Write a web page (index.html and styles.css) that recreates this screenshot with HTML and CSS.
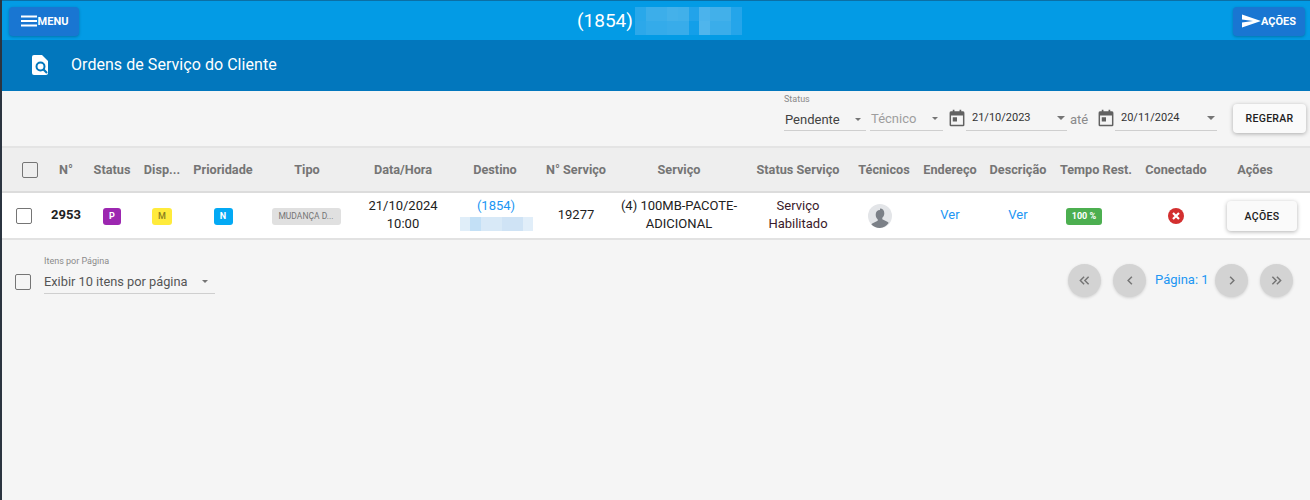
FILE: index.html
```html
<!DOCTYPE html>
<html lang="pt-BR">
<head>
    <meta charset="UTF-8">
    <title>Ordens de Serviço do Cliente</title>
    <link rel="stylesheet" href="styles.css">
</head>
<body>
    <header class="topbar">
        <button class="top-btn top-btn-menu">
            <svg width="18" height="18" viewBox="0 0 18 18"><path d="M1 3.5h16v2H1zM1 8h16v2H1zM1 12.500h16v2H1z" fill="#fff"/></svg>
            MENU
        </button>
        <div class="top-title">
            <span>(1854)</span>
            <span class="blur-name"><i class="blur-row blur-a"></i><i class="blur-row blur-b"></i></span>
        </div>
        <button class="top-btn top-btn-acoes">
            <svg width="19" height="18" viewBox="0 0 19 18"><path d="M0 2.500 19 9 0 15.500V10.500L11 9 0 7.500z" fill="#fff"/></svg>
            AÇÕES
        </button>
    </header>

    <div class="subheader">
        <svg class="sub-icon" width="16" height="20" viewBox="0 0 16 20">
            <path d="M2 0h8l6 6v12a2 2 0 0 1-2 2H2a2 2 0 0 1-2-2V2a2 2 0 0 1 2-2z" fill="#fff"/>
            <circle cx="8.500" cy="11.500" r="4" fill="none" stroke="#0277bd" stroke-width="2"/>
            <path d="M11.300 14.300 15 18" stroke="#0277bd" stroke-width="2.200"/>
        </svg>
        <h1>Ordens de Serviço do Cliente</h1>
    </div>

    <div class="filters">
        <div class="field field-status">
            <label>Status</label>
            <div class="select"><span>Pendente</span><b class="caret"></b></div>
        </div>
        <div class="field field-tecnico">
            <div class="select muted"><span>Técnico</span><b class="caret"></b></div>
        </div>
        <svg class="cal" width="18" height="20" viewBox="0 0 18 20"><path d="M4 0h2v2h6V0h2v2h2a2 2 0 0 1 2 2v14a2 2 0 0 1-2 2H2a2 2 0 0 1-2-2V4a2 2 0 0 1 2-2h2zM2 7v11h14V7zM4 9h5v5H4z" fill="#616161" fill-rule="evenodd"/></svg>
        <div class="field field-date">
            <div class="select date"><span>21/10/2023</span><b class="caret"></b></div>
        </div>
        <span class="ate">até</span>
        <svg class="cal" width="18" height="20" viewBox="0 0 18 20"><path d="M4 0h2v2h6V0h2v2h2a2 2 0 0 1 2 2v14a2 2 0 0 1-2 2H2a2 2 0 0 1-2-2V4a2 2 0 0 1 2-2h2zM2 7v11h14V7zM4 9h5v5H4z" fill="#616161" fill-rule="evenodd"/></svg>
        <div class="field field-date field-date-end">
            <div class="select date"><span>20/11/2024</span><b class="caret"></b></div>
        </div>
        <button class="btn-white btn-regerar">REGERAR</button>
    </div>

    <div class="grid grid-head">
        <div class="cell"><span class="check check-head"></span></div>
        <div class="cell">N°</div>
        <div class="cell">Status</div>
        <div class="cell">Disp...</div>
        <div class="cell">Prioridade</div>
        <div class="cell">Tipo</div>
        <div class="cell">Data/Hora</div>
        <div class="cell">Destino</div>
        <div class="cell">N° Serviço</div>
        <div class="cell">Serviço</div>
        <div class="cell">Status Serviço</div>
        <div class="cell">Técnicos</div>
        <div class="cell">Endereço</div>
        <div class="cell">Descrição</div>
        <div class="cell">Tempo Rest.</div>
        <div class="cell">Conectado</div>
        <div class="cell cell-head-acoes">Ações</div>
    </div>

    <div class="grid grid-row">
        <div class="cell"><span class="check"></span></div>
        <div class="cell num">2953</div>
        <div class="cell"><span class="tag tag-p">P</span></div>
        <div class="cell"><span class="tag tag-m">M</span></div>
        <div class="cell"><span class="tag tag-n">N</span></div>
        <div class="cell"><span class="tag-tipo">MUDANÇA D...</span></div>
        <div class="cell">21/10/2024<br>10:00</div>
        <div class="cell destino">
            <a>(1854)</a>
            <span class="blur-dest"></span>
        </div>
        <div class="cell">19277</div>
        <div class="cell">(4) 100MB-PACOTE-<br>ADICIONAL</div>
        <div class="cell status-serv">Serviço<br>Habilitado</div>
        <div class="cell">
            <svg class="avatar" width="24" height="24" viewBox="0 0 24 24">
                <circle cx="12" cy="12" r="12" fill="#e3e5e8"/>
                <path d="M12 4.500c2.700 0 4.300 2 4.300 4.700 0 2-.9 3.700-2 4.600v1.500l5 2.500c.6.300 1 .8 1.300 1.300A12 12 0 0 1 12 24a12 12 0 0 1-8.600-3.400c.3-.5.7-1 1.300-1.300l5-2.500v-1.500c-1.100-.9-2-2.600-2-4.600 0-2.700 1.600-4.700 4.300-4.700z" fill="#7b8087"/>
            </svg>
        </div>
        <div class="cell"><a>Ver</a></div>
        <div class="cell"><a>Ver</a></div>
        <div class="cell"><span class="tag-tempo">100 %</span></div>
        <div class="cell">
            <svg class="icon-off" width="16" height="16" viewBox="0 0 16 16">
                <circle cx="8" cy="8" r="8" fill="#d32f2f"/>
                <path d="M5 5l6 6M11 5l-6 6" stroke="#fff" stroke-width="2.200"/>
            </svg>
        </div>
        <div class="cell cell-row-acoes"><button class="btn-white btn-row">AÇÕES</button></div>
    </div>

    <footer class="pager-bar">
        <span class="check"></span>
        <div class="field field-pagesize">
            <label>Itens por Página</label>
            <div class="select"><span>Exibir 10 itens por página</span><b class="caret"></b></div>
        </div>
        <div class="pager">
            <button class="round"><svg width="11" height="9" viewBox="0 0 14 12"><path d="M6.500 1 1.500 6l5 5M12.500 1l-5 5 5 5" fill="none" stroke="#757575" stroke-width="2"/></svg></button>
            <button class="round"><svg width="6" height="9" viewBox="0 0 8 12"><path d="M6.500 1l-5 5 5 5" fill="none" stroke="#757575" stroke-width="2"/></svg></button>
            <span class="page-label">Página: 1</span>
            <button class="round"><svg width="6" height="9" viewBox="0 0 8 12"><path d="M1.500 1l5 5-5 5" fill="none" stroke="#757575" stroke-width="2"/></svg></button>
            <button class="round"><svg width="11" height="9" viewBox="0 0 14 12"><path d="M1.500 1l5 5-5 5M7.500 1l5 5-5 5" fill="none" stroke="#757575" stroke-width="2"/></svg></button>
        </div>
    </footer>
</body>
</html>
```

FILE: styles.css
```css
* {
    box-sizing: border-box;
}

html {
    height: 100%;
}

body {
    margin: 0;
    min-height: 100%;
    height: 500px;
    overflow: hidden;
    background: #f5f5f5;
    border-left: 2px solid #2b3440;
    font-family: Roboto, "Liberation Sans", sans-serif;
    font-size: 13px;
    color: #212121;
}

button {
    font-family: inherit;
    border: 0;
    cursor: pointer;
}

a {
    color: #2196f3;
}

/* top bar */
.topbar {
    height: 40px;
    display: flex;
    align-items: center;
    justify-content: space-between;
    padding: 0 5px 0 7px;
    background: #039be5;
    border-top: 1px solid #0b6fa5;
    color: #fff;
}

.top-btn {
    height: 29px;
    display: flex;
    align-items: center;
    justify-content: center;
    gap: 0;
    border-radius: 4px;
    background: #1976d2;
    color: #fff;
    font-size: 11px;
    font-weight: 700;
    box-shadow: 0 1px 3px rgba(0, 0, 0, .25);
}

.top-btn-menu {
    width: 70px;
    margin-top: 1px;
    padding: 0;
}

.top-btn-acoes {
    width: 72px;
    margin-top: 1px;
    padding: 0;
}

.top-title {
    display: flex;
    align-items: center;
    gap: 2px;
    margin-left: 7px;
    font-size: 19px;
}

.blur-name {
    width: 107px;
    height: 28px;
    display: flex;
    flex-direction: column;
}

.blur-row {
    flex: 1;
}

.blur-a {
    background: linear-gradient(90deg, #29a8ea 0 11px, #3caeea 11px 32px, #44b1ea 32px 43px, #41b0ea 43px 54px, #22a3ea 54px 64px, #4bb3ec 64px 75px, #42b0ea 75px 96px, #24a5ea 96px 107px);
}

.blur-b {
    background: linear-gradient(90deg, #2ca8ea 0 11px, #34abea 11px 32px, #38acea 32px 54px, #139fe9 54px 64px, #4fb5ec 64px 75px, #3aadea 75px 96px, #25a5ea 96px 107px);
}

/* sub header */
.subheader {
    height: 51px;
    display: flex;
    align-items: center;
    padding-left: 30px;
    background: #0277bd;
    color: #fff;
}

.sub-icon {
    margin-top: -1px;
}

.subheader h1 {
    margin: 0 0 2px 23px;
    font-size: 16px;
    font-weight: 400;
    letter-spacing: .05px;
}

/* filters */
.filters {
    height: 57px;
    display: flex;
    align-items: flex-end;
    padding: 0 4px 15px 782px;
    border-bottom: 2px solid #e4e4e4;
}

.field {
    display: flex;
    flex-direction: column;
    flex: none;
}

.field label {
    font-size: 9px;
    line-height: 11px;
    color: #8a8a8a;
    margin-bottom: 4px;
}

.select {
    display: flex;
    align-items: center;
    justify-content: space-between;
    height: 22px;
    padding: 0 5px 0 1px;
    border-bottom: 1px solid #cfcfcf;
    font-size: 13px;
    color: #424242;
}

.select.muted {
    padding-bottom: 2px;
    color: #9e9e9e;
}

.select.date {
    padding: 0 2px 4px 6px;
    font-size: 11px;
    color: #333;
}

.caret {
    width: 0;
    height: 0;
    border-left: 3px solid transparent;
    border-right: 3px solid transparent;
    border-top: 3px solid #757575;
}

.date .caret {
    border-left-width: 4px;
    border-right-width: 4px;
    border-top-width: 4px;
}

.field-status {
    width: 82px;
}

.field-tecnico {
    width: 73px;
    margin-left: 4px;
}

.field-date {
    width: 101px;
}

.field-date-end {
    width: 102px;
}

.cal {
    margin: 0 0 3px 5px;
    flex: none;
    transform: scale(.85);
}

.ate {
    width: 25px;
    padding-left: 3px;
    line-height: 22px;
    color: #8a8a8a;
    font-size: 13px;
}

.btn-white {
    background: #fafafa;
    color: #212121;
    border-radius: 4px;
    font-size: 10.500px;
    font-weight: 500;
    letter-spacing: .3px;
    box-shadow: 0 1px 4px rgba(0, 0, 0, .3);
}

.btn-regerar {
    width: 73px;
    height: 29px;
    margin: 0 0 -2px 16px;
    padding: 0;
}

/* table */
.grid {
    display: grid;
    grid-template-columns: 44px 40px 52px 48px 74px 94px 98px 86px 76px 130px 108px 64px 68px 68px 88px 72px 98px;
}

.cell {
    display: flex;
    flex-direction: column;
    align-items: center;
    justify-content: center;
    text-align: center;
    white-space: nowrap;
}

.grid-head {
    height: 45px;
    background: #eeeeee;
    border-bottom: 2px solid #dcdcdc;
    color: #757575;
    font-size: 12.700px;
    font-weight: 700;
}

.grid-head .cell:first-child {
    padding-left: 12px;
}

.cell-head-acoes {
    padding-right: 12px;
}

.grid-row {
    height: 47px;
    padding-bottom: 2px;
    background: #fff;
    border-bottom: 2px solid #e2e2e2;
    font-size: 13px;
    line-height: 18px;
}

.check {
    display: block;
    width: 16px;
    height: 16px;
    border: 1px solid #757575;
    border-radius: 2px;
    background: #fff;
}

.grid-row .check {
    margin-top: 2px;
}

.check-head {
    background: transparent;
}

.num {
    font-weight: 700;
    font-size: 13px;
}

.tag {
    width: 18px;
    height: 17px;
    margin-top: 4px;
    border-radius: 3px;
    font-size: 9px;
    font-weight: 700;
    line-height: 17px;
    color: #fff;
}

.tag-p {
    background: #9c27b0;
}

.tag-m {
    width: 20px;
    background: #ffeb3b;
    color: #8a7d20;
    font-weight: 500;
}

.tag-n {
    width: 19px;
    background: #03a9f4;
}

.tag-tipo {
    width: 69px;
    height: 17px;
    margin: 4px 2px 0 0;
    border-radius: 3px;
    background: #e0e0e0;
    color: #757575;
    font-size: 8.500px;
    line-height: 17px;
}

.destino {
    padding-left: 2px;
}

.destino a {
    line-height: 18px;
}

.blur-dest {
    width: 73px;
    height: 14px;
    margin: 2px 0;
    background: linear-gradient(90deg, #e0eef9 0 10px, #c3e0f6 10px 21px, #d8e9f7 21px 42px, #cfe3f5 42px 63px, #e1eef9 63px 73px);
}

.status-serv {
    color: #3a1a2a;
}

.avatar {
    margin: 2px 8px 0 0;
}

.tag-tempo {
    width: 36px;
    height: 17px;
    margin: 4px 24px 0 0;
    border-radius: 3px;
    background: #4caf50;
    color: #fff;
    font-size: 9px;
    font-weight: 700;
    line-height: 17px;
}

.icon-off {
    margin-top: 3px;
}

.cell-row-acoes {
    padding: 3px 0 0 2px;
}

.btn-row {
    width: 70px;
    height: 30px;
    padding: 0;
}

/* footer */
.pager-bar {
    display: flex;
    align-items: flex-start;
    padding: 16px 17px 0 13px;
}

.pager-bar > .check {
    margin-top: 18px;
    background: transparent;
}

.field-pagesize {
    width: 171px;
    margin-left: 13px;
}

.field-pagesize label {
    margin-bottom: 3px;
}

.field-pagesize .select {
    height: 24px;
    padding: 0 7px 0 0;
    font-size: 12.800px;
    color: #555;
}

.pager {
    display: flex;
    align-items: center;
    margin-left: auto;
    margin-top: 8px;
}

.round {
    width: 33px;
    height: 33px;
    display: flex;
    align-items: center;
    justify-content: center;
    padding: 0;
    border-radius: 50%;
    background: #d3d3d3;
    box-shadow: 0 1px 3px rgba(0, 0, 0, .15);
}

.round + .round {
    margin-left: 12px;
}

.page-label {
    width: 69px;
    padding: 0 0 2px 9px;
    color: #2196f3;
    font-size: 13px;
}
```
